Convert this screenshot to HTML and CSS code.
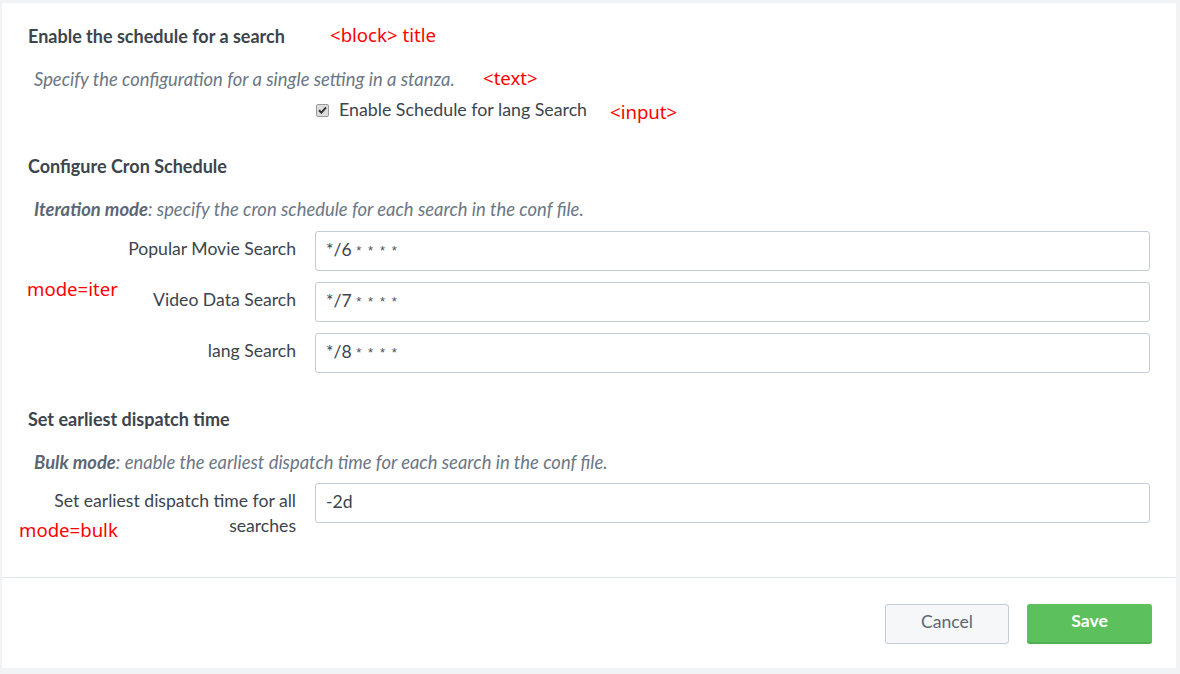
FILE: index.html
```html
<!DOCTYPE html>
<html>
<head>
<meta charset="utf-8">
<link rel="stylesheet" href="styles.css">
</head>
<body>
<div class="panel">
  <div class="form">
    <section class="block">
      <div class="block-title"><span>Enable the schedule for a search</span><span class="note note-title">&lt;block&gt; title</span></div>
      <div class="desc"><span>Specify the configuration for a single setting in a stanza.</span><span class="note note-text">&lt;text&gt;</span></div>
      <div class="check-row">
        <span class="check-spacer"></span>
        <label class="check">
          <span class="box"><svg width="9" height="8" viewBox="0 0 9 8"><path d="M1 4.2 L3.4 6.6 L8 1.4" fill="none" stroke="#333" stroke-width="2"/></svg></span>
          <span class="check-label">Enable Schedule for lang Search</span>
        </label>
        <span class="note note-input">&lt;input&gt;</span>
      </div>
    </section>

    <section class="block block-2">
      <div class="block-title"><span>Configure Cron Schedule</span></div>
      <div class="desc"><span><b>Iteration mode</b>: specify the cron schedule for each search in the conf file.</span></div>
      <div class="rows">
        <span class="note note-iter">mode=iter</span>
        <div class="row"><div class="label"><span>Popular Movie Search</span></div><div class="input">*/6 <span class="stars">* * * *</span></div></div>
        <div class="row"><div class="label"><span>Video Data Search</span></div><div class="input">*/7 <span class="stars">* * * *</span></div></div>
        <div class="row"><div class="label"><span>lang Search</span></div><div class="input">*/8 <span class="stars">* * * *</span></div></div>
      </div>
    </section>

    <section class="block block-3">
      <div class="block-title"><span>Set earliest dispatch time</span></div>
      <div class="desc"><span><b>Bulk mode</b>: enable the earliest dispatch time for each search in the conf file.</span></div>
      <div class="rows">
        <span class="note note-bulk">mode=bulk</span>
        <div class="row"><div class="label label-multi"><div class="ln">Set earliest dispatch time for all</div><div class="ln ln-2">searches</div></div><div class="input">-2d</div></div>
      </div>
    </section>
  </div>
  <div class="footer">
    <button class="btn btn-cancel">Cancel</button>
    <button class="btn btn-save">Save</button>
  </div>
</div>
</body>
</html>
```

FILE: styles.css
```css
* { box-sizing: border-box; }
html, body { margin: 0; padding: 0; }
body {
  background: #f2f3f5;
  font-family: Lato, "Open Sans", "Liberation Sans", sans-serif;
  color: #3c444d;
  width: 1180px;
  height: 674px;
  overflow: hidden;
}
.panel {
  margin: 3px 4px 0 2px;
  height: 665px;
  background: #fff;
  display: flex;
  flex-direction: column;
}
.form {
  height: 575px;
  padding: 23px 26px 0 0;
  border-bottom: 1px solid #e1e6eb;
}
.block-title {
  position: relative;
  padding-left: 26px;
  font-size: 18px;
  line-height: 20px;
  font-weight: 700;
  color: #3c444d;
}
.desc {
  position: relative;
  margin-top: 23px;
  padding-left: 32px;
  font-size: 18.4px;
  line-height: 20px;
  font-style: italic;
  color: #6b7785;
}
.desc b { font-weight: 700; color: #5c6773; }
.note {
  position: absolute;
  color: #f00;
  font-family: "Noto Sans", sans-serif;
  font-size: 18.6px;
  font-weight: 400;
  font-style: normal;
  line-height: 20px;
  white-space: nowrap;
}
.note-title { left: 328px; top: -1px; }
.note-text { left: 481px; top: -1px; }
.check-row {
  position: relative;
  margin-top: 11px;
  display: flex;
  align-items: center;
  height: 20px;
}
.check-spacer { width: 314px; flex: none; }
.check { display: flex; align-items: center; }
.box {
  width: 13px;
  height: 13px;
  border: 1px solid #9a9a9a;
  border-radius: 2px;
  background: #dcdcdc;
  display: flex;
  align-items: center;
  justify-content: center;
}
.check-label {
  margin-left: 10px;
  font-size: 17.8px;
  line-height: 20px;
  margin-top: -2px;
  color: #3c444d;
}
.note-input { left: 608px; top: 2px; }
.block-2, .block-3 { margin-top: 36px; }
.rows {
  position: relative;
  margin-top: 12px;
  display: flex;
  flex-direction: column;
  gap: 11px;
}
.block-3 .rows { margin-top: 11px; }
.row {
  display: grid;
  grid-template-columns: 294px 1fr;
  column-gap: 19px;
  align-items: start;
}
.label {
  text-align: right;
  font-size: 17.6px;
  line-height: 20px;
  padding-top: 8px;
  color: #3c444d;
}
.label-multi {
  padding-top: 5px;
  line-height: 25px;
  display: flex;
  flex-direction: column;
  align-items: flex-end;
}
.ln { white-space: nowrap; }
.input {
  height: 40px;
  border: 1px solid #c3cbd4;
  border-radius: 3px;
  padding: 0 10px;
  font-size: 17.6px;
  line-height: 36px;
  color: #3c444d;
}
.stars {
  font-family: "Liberation Sans", sans-serif;
  font-size: 13px;
  letter-spacing: 1.6px;
  vertical-align: 1px;
  color: #4a525c;
}
.note-iter { left: 25px; top: 48px; }
.note-bulk { left: 17px; top: 37px; }
.footer {
  flex: 1;
  display: flex;
  justify-content: flex-end;
  align-items: flex-start;
  padding: 26px 24px 0 0;
  gap: 18px;
}
.btn {
  height: 40px;
  border-radius: 3px;
  font-family: Lato, "Open Sans", sans-serif;
  font-size: 17.6px;
  line-height: 20px;
  padding: 0 0 4px;
  cursor: pointer;
}
.btn-cancel {
  width: 124px;
  background: #f5f7f9;
  border: 1px solid #c3cbd4;
  color: #5c6773;
}
.btn-save {
  width: 125px;
  background: #5cc05c;
  border: none;
  border-bottom: 2px solid #4fae4f;
  color: #fff;
  font-weight: 700;
}
```
